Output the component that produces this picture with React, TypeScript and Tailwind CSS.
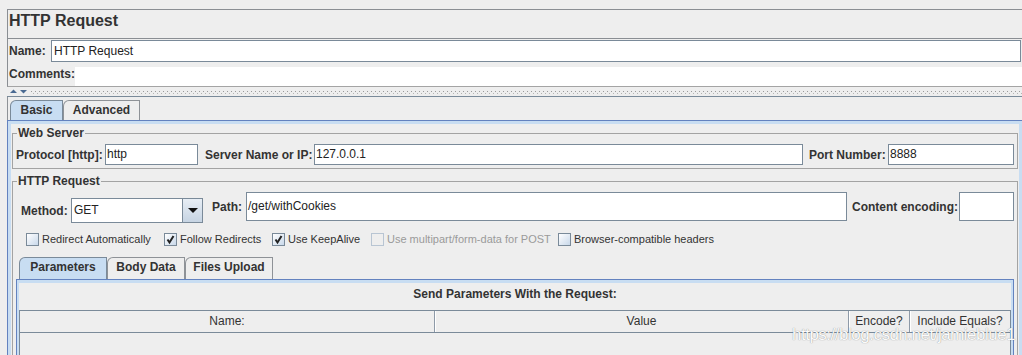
import React from "react";

function Tab({ label, selected, w }: { label: string; selected?: boolean; w: string }) {
  return (
    <div
      className={
        w +
        " h-full flex justify-center rounded-tl-[6px] border-t border-l border-r text-[12px] leading-[14px] font-bold whitespace-nowrap " +
        (selected ? "bg-[#c8ddf2] border-[#7a8a99]" : "bg-[#eeeeee] border-[#8e9297]")
      }
    >
      <span className="pt-[2px]">{label}</span>
    </div>
  );
}

function Check({ label, checked, disabled, w }: { label: string; checked?: boolean; disabled?: boolean; w: string }) {
  return (
    <div className={w + " flex items-center h-[13px]"}>
      <div
        className={
          "w-[13px] h-[13px] shrink-0 flex items-center justify-center border " +
          (disabled
            ? "border-[#b8c5d3] bg-[#eeeeee]"
            : "border-[#7a8a99] bg-[linear-gradient(135deg,#ffffff,#c8d8ea)]")
        }
      >
        {checked && (
          <svg width="11" height="11" viewBox="0 0 11 11">
            <path d="M2.5 5.5 L4.5 8.5 L8.5 2" fill="none" stroke="#222222" strokeWidth="2" />
          </svg>
        )}
      </div>
      <span
        className={
          "ml-[3px] text-[11px] leading-[13px] whitespace-nowrap " + (disabled ? "text-[#9a9a9a]" : "text-[#333333]")
        }
      >
        {label}
      </span>
    </div>
  );
}

export default function App() {
  return (
    <div className="relative w-[1022px] h-[355px] overflow-hidden bg-[#eeeeee] text-[#333333] font-['Liberation_Sans',Arial,sans-serif]">
      {/* Title / name / comments panel */}
      <div className="mt-[9px] ml-[7px] w-[1016px] border-t border-l border-r border-b border-t-[#8a8e93] border-l-[#8a8e93] border-r-[#8a8e93] border-b-[#a4a4a4] flex flex-col">
        <div className="h-[29px] pt-[1px] pl-[1px] text-[16px] leading-[20px] font-bold border-b border-[#8a8e93]">
          HTTP Request
        </div>
        <div className="h-[24px] flex items-start">
          <span className="w-[43px] mt-[5px] pl-[1px] text-[12px] leading-[14px] font-bold">Name:</span>
          <div className="mt-[1px] mr-[1px] flex-1 h-[22px] bg-white border border-[#7a8a99] pl-[2px] text-[12px] leading-[20px] text-[#222222]">
            HTTP Request
          </div>
        </div>
        <div className="h-[23px] flex items-start">
          <span className="w-[67px] mt-[4px] pl-[1px] text-[12px] leading-[14px] font-bold">Comments:</span>
          <div className="mt-[4px] flex-1 h-[19px] bg-white" />
        </div>
      </div>

      {/* split divider */}
      <div className="h-[9px] ml-[7px] w-[1015px] flex items-center">
        <svg width="24" height="9" viewBox="0 0 24 9" className="shrink-0">
          <path d="M3 6 L6.5 2.5 L10 6 Z" fill="#4a6a92" />
          <path d="M13 3 L20 3 L16.5 6.5 Z" fill="#4a6a92" />
        </svg>
        <svg className="flex-1" height="9">
          <defs>
            <pattern id="bumps" width="4" height="4" patternUnits="userSpaceOnUse">
              <rect x="0" y="0" width="1" height="1" fill="#9a9a9a" />
              <rect x="2" y="2" width="1" height="1" fill="#b4b4b4" />
            </pattern>
          </defs>
          <rect x="0" y="3" width="100%" height="4" fill="url(#bumps)" />
        </svg>
      </div>

      {/* Basic / Advanced tabbed pane */}
      <div className="ml-[7px] w-[1016px] border-t border-[#7a8a99]">
        <div className="h-[23px] pt-[3px] pl-[2px] border-l border-[#8e9297] flex">
          <Tab label="Basic" selected w="w-[53px]" />
          <Tab label="Advanced" w="w-[77px]" />
        </div>
        <div className="border-t border-l border-r border-[#6382bf]">
          <div className="border-t-[3px] border-l-[3px] border-r-[3px] border-[#c8ddf2] h-[240px]">
            {/* Web Server */}
            <fieldset className="mx-[1px] mt-[2px] border border-[#a3a3a3] px-[3px] pt-[4px] pb-[3px]">
              <legend className="ml-[1px] px-[1px] text-[12px] leading-[14px] font-bold">Web Server</legend>
              <div className="flex items-center h-[21px] text-[12px] font-bold whitespace-nowrap">
                <span className="w-[89px]">Protocol [http]:</span>
                <div className="w-[93px] h-[21px] bg-white border border-[#7a8a99] pl-[1px] font-normal leading-[19px] text-[#222222]">
                  http
                </div>
                <span className="ml-[7px] w-[109px]">Server Name or IP:</span>
                <div className="flex-1 h-[21px] bg-white border border-[#7a8a99] pl-[1px] font-normal leading-[19px] text-[#222222]">
                  127.0.0.1
                </div>
                <span className="ml-[6px] w-[79px]">Port Number:</span>
                <div className="w-[126px] h-[21px] bg-white border border-[#7a8a99] pl-[1px] font-normal leading-[19px] text-[#222222]">
                  8888
                </div>
              </div>
            </fieldset>

            {/* HTTP Request */}
            <fieldset className="mx-[1px] mt-[5px] border border-[#a3a3a3] px-[3px] pt-[4px] pb-[3px]">
              <legend className="ml-[1px] px-[1px] text-[12px] leading-[14px] font-bold">HTTP Request</legend>
              <div className="flex items-start pl-[5px] text-[12px] font-bold whitespace-nowrap">
                <div className="mt-[6px] flex items-center">
                  <span className="w-[50px]">Method:</span>
                  <div className="w-[132px] h-[25px] flex bg-white border border-[#7a8a99]">
                    <span className="flex-1 pl-[2px] font-normal leading-[23px] text-[#222222]">GET</span>
                    <div className="w-[20px] h-full border-l border-[#7a8a99] bg-[linear-gradient(#e8eef5,#c6d4e3)] flex items-center justify-center">
                      <svg width="10" height="5" viewBox="0 0 10 5">
                        <path d="M0 0 L10 0 L5 5 Z" fill="#111111" />
                      </svg>
                    </div>
                  </div>
                </div>
                <div className="ml-[9px] flex-1 h-[29px] flex items-center">
                  <span className="w-[34px]">Path:</span>
                  <div className="flex-1 h-[29px] bg-white border border-[#7a8a99] pl-[1px] font-normal leading-[27px] text-[#222222]">
                    /get/withCookies
                  </div>
                </div>
                <div className="ml-[5px] h-[29px] flex items-center">
                  <span className="w-[107px]">Content encoding:</span>
                  <div className="w-[55px] h-[29px] bg-white border border-[#7a8a99]" />
                </div>
              </div>

              <div className="mt-[10px] pl-[10px] flex items-center h-[13px]">
                <Check label="Redirect Automatically" w="w-[138px]" />
                <Check label="Follow Redirects" checked w="w-[108px]" />
                <Check label="Use KeepAlive" checked w="w-[99px]" />
                <Check label="Use multipart/form-data for POST" disabled w="w-[187px]" />
                <Check label="Browser-compatible headers" w="w-[160px]" />
              </div>

              {/* Parameters / Body Data / Files Upload */}
              <div className="mt-[11px]">
                <div className="h-[22px] pl-[3px] flex">
                  <Tab label="Parameters" selected w="w-[88px]" />
                  <Tab label="Body Data" w="w-[78px]" />
                  <Tab label="Files Upload" w="w-[88px]" />
                </div>
                <div className="border-t border-l border-r border-[#6382bf]">
                  <div className="border-t-[3px] border-l-[2px] border-r-[2px] border-[#c8ddf2] h-[80px]">
                    <div className="mt-[4px] text-center text-[12px] leading-[14px] font-bold">
                      Send Parameters With the Request:
                    </div>
                    <div className="mt-[9px] w-[992px] h-[60px] border-t border-l border-r border-[#7a8a99]">
                      <div className="h-[22px] flex border-b border-[#7a8a99] text-[12px] leading-[21px] text-[#333333]">
                        <div className="w-[415px] text-center border-r border-[#8e9aa8]">Name:</div>
                        <div className="w-[414px] text-center border-r border-[#8e9aa8] shadow-[inset_1px_0_0_#ffffff]">Value</div>
                        <div className="w-[61px] text-center border-r border-[#8e9aa8] shadow-[inset_1px_0_0_#ffffff]">Encode?</div>
                        <div className="w-[100px] text-center shadow-[inset_1px_0_0_#ffffff]">Include Equals?</div>
                      </div>
                    </div>
                  </div>
                </div>
              </div>
            </fieldset>
          </div>
        </div>
      </div>

      {/* watermark */}
      <div className="absolute left-[792px] top-[326px] text-[17px] leading-[18px] tracking-[-0.5px] text-[#fbfbfb] [text-shadow:0_0_1px_rgba(0,0,0,0.5)] whitespace-nowrap">
        https://blog.csdn.net/jamieblue1
      </div>
    </div>
  );
}
